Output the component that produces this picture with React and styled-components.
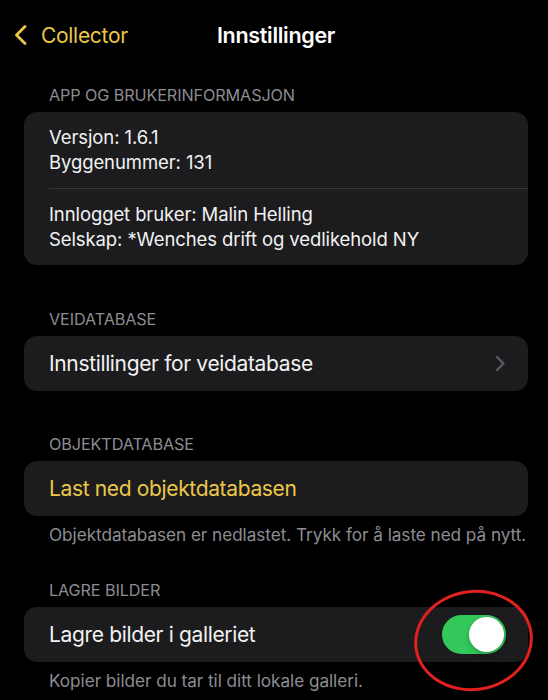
import React from 'react';
import styled, { createGlobalStyle } from 'styled-components';

const GlobalStyle = createGlobalStyle`
  html, body {
    margin: 0;
    padding: 0;
    background: #000;
  }
  body {
    font-family: Inter, "Noto Sans", "Liberation Sans", sans-serif;
    -webkit-font-smoothing: antialiased;
  }
`;

const Page = styled.div`
  position: relative;
  width: 548px;
  height: 700px;
  overflow: hidden;
  background: #000;
  color: #fff;
`;

const NavBar = styled.div`
  position: relative;
  height: 70px;
  display: flex;
  align-items: center;
  justify-content: center;
`;

const BackButton = styled.div`
  position: absolute;
  left: 14px;
  top: 0;
  height: 70px;
  display: flex;
  align-items: center;
  gap: 14px;
  color: #ecc748;
  font-size: 21px;
  letter-spacing: -0.3px;
`;

const Title = styled.div`
  font-size: 21.5px;
  font-weight: 600;
  letter-spacing: -0.3px;
  margin-left: 4px;
`;

const Content = styled.div`
  padding: 0 20px 0 24px;
  display: flex;
  flex-direction: column;
`;

const Section = styled.section`
  margin-top: ${(p) => p.$gap}px;
`;

const Header = styled.div`
  padding-left: 25px;
  height: 20px;
  line-height: 20px;
  margin-bottom: 7px;
  color: #8c8c92;
  font-size: 16.2px;
  letter-spacing: -0.1px;
`;

const Card = styled.div`
  background: #1c1c1e;
  border-radius: 13px;
  overflow: hidden;
`;

const InfoGroup = styled.div`
  padding: 13px 25px;
  font-size: 18.5px;
  line-height: 25px;
  letter-spacing: -0.1px;
  color: #f2f2f2;
`;

const Divider = styled.div`
  height: 1px;
  background: #38383a;
  margin-left: 25px;
`;

const Row = styled.div`
  height: 55px;
  display: flex;
  align-items: center;
  justify-content: space-between;
  padding: 0 22px 0 25px;
  font-size: 21px;
  letter-spacing: -0.35px;
  color: ${(p) => (p.$accent ? '#ecc748' : '#f2f2f2')};
`;

const Footer = styled.div`
  padding-left: 25px;
  margin-top: 9px;
  height: 20px;
  line-height: 20px;
  white-space: nowrap;
  color: #8c8c92;
  font-size: 17.2px;
  letter-spacing: -0.05px;
`;

const Toggle = styled.div`
  width: 64px;
  height: 39px;
  border-radius: 20px;
  background: #33c85a;
  display: flex;
  align-items: center;
  justify-content: flex-end;
  padding: 0 2px;
  box-sizing: border-box;
`;

const Knob = styled.div`
  width: 35px;
  height: 35px;
  border-radius: 50%;
  background: #fff;
  box-shadow: 0 2px 5px rgba(0, 0, 0, 0.25);
`;

const Annotation = styled.div`
  position: absolute;
  left: 414px;
  top: 590px;
  width: 119px;
  height: 101px;
  border: 3px solid #e2201f;
  border-radius: 50%;
  box-sizing: border-box;
  transform: rotate(-8deg);
`;

const BackChevron = () => (
  <svg width="13" height="20" viewBox="0 0 13 20">
    <path d="M11 1.5 L2.5 10 L11 18.5" fill="none" stroke="#ecc748" strokeWidth="2.8" strokeLinecap="round" strokeLinejoin="round" />
  </svg>
);

const Disclosure = () => (
  <svg width="11" height="17" viewBox="0 0 11 17">
    <path d="M2 2 L8.5 8.5 L2 15" fill="none" stroke="#5b5b60" strokeWidth="2.4" strokeLinecap="round" strokeLinejoin="round" />
  </svg>
);

const App = () => {
  return (
    <Page>
      <GlobalStyle />
      <NavBar>
        <BackButton>
          <BackChevron />
          Collector
        </BackButton>
        <Title>Innstillinger</Title>
      </NavBar>
      <Content>
        <Section $gap={15}>
          <Header>APP OG BRUKERINFORMASJON</Header>
          <Card>
            <InfoGroup>
              <div>Versjon: 1.6.1</div>
              <div>Byggenummer: 131</div>
            </InfoGroup>
            <Divider />
            <InfoGroup>
              <div>Innlogget bruker: Malin Helling</div>
              <div>Selskap: *Wenches drift og vedlikehold NY</div>
            </InfoGroup>
          </Card>
        </Section>
        <Section $gap={44}>
          <Header>VEIDATABASE</Header>
          <Card>
            <Row>
              Innstillinger for veidatabase
              <Disclosure />
            </Row>
          </Card>
        </Section>
        <Section $gap={43}>
          <Header>OBJEKTDATABASE</Header>
          <Card>
            <Row $accent>Last ned objektdatabasen</Row>
          </Card>
          <Footer>Objektdatabasen er nedlastet. Trykk for å laste ned på nytt.</Footer>
        </Section>
        <Section $gap={35}>
          <Header>LAGRE BILDER</Header>
          <Card>
            <Row>
              Lagre bilder i galleriet
              <Toggle>
                <Knob />
              </Toggle>
            </Row>
          </Card>
          <Footer>Kopier bilder du tar til ditt lokale galleri.</Footer>
        </Section>
      </Content>
      <Annotation />
    </Page>
  );
};

export default App;
